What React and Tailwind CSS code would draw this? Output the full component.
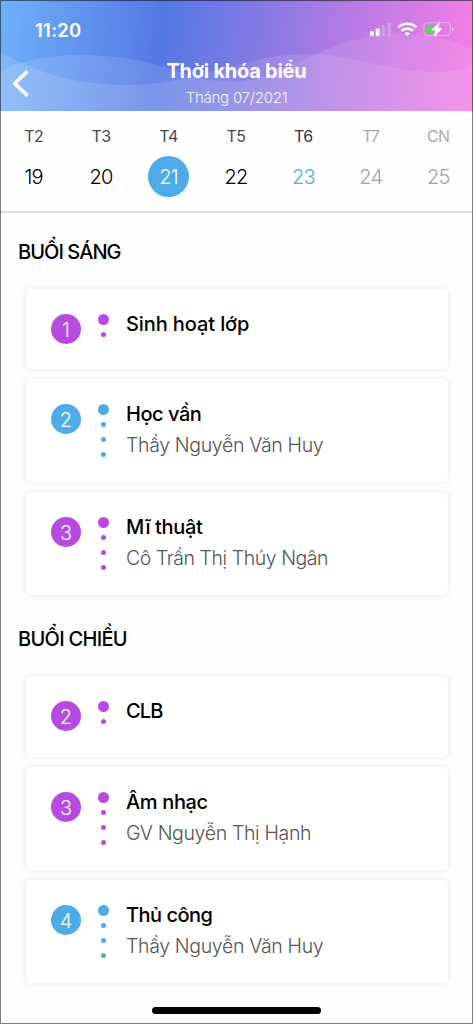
const days = [
  { name: "T2", date: "19", head: "text-[#4a4a4a]", num: "text-black" },
  { name: "T3", date: "20", head: "text-[#4a4a4a]", num: "text-black" },
  { name: "T4", date: "21", head: "text-[#4a4a4a]", num: "text-white bg-[#4dabea]" },
  { name: "T5", date: "22", head: "text-[#4a4a4a]", num: "text-black" },
  { name: "T6", date: "23", head: "text-[#333333]", num: "text-[#4dabea]" },
  { name: "T7", date: "24", head: "text-[#aaaaaa]", num: "text-[#a3a3a3]" },
  { name: "CN", date: "25", head: "text-[#aaaaaa]", num: "text-[#a3a3a3]" },
];

const morning = [
  { no: 1, title: "Sinh hoạt lớp", tracking: "tracking-[-0.1px]", color: "bg-[#b74ae1]", height: "h-[80px]" },
  { no: 2, title: "Học vần", tracking: "tracking-[-0.45px]", teacher: "Thầy Nguyễn Văn Huy", sub: "tracking-[-0.35px]", color: "bg-[#4dabea]", height: "h-[103px]" },
  { no: 3, title: "Mĩ thuật", tracking: "tracking-[-0.35px]", teacher: "Cô Trần Thị Thúy Ngân", sub: "tracking-[-0.45px]", color: "bg-[#b74ae1]", height: "h-[103px]" },
];

const afternoon = [
  { no: 2, title: "CLB", tracking: "tracking-[-0.9px]", color: "bg-[#b74ae1]", height: "h-[81px]" },
  { no: 3, title: "Âm nhạc", tracking: "tracking-[-0.35px]", teacher: "GV Nguyễn Thị Hạnh", sub: "tracking-[-0.35px]", color: "bg-[#b74ae1]", height: "h-[103px]" },
  { no: 4, title: "Thủ công", tracking: "tracking-[-0.5px]", teacher: "Thầy Nguyễn Văn Huy", sub: "tracking-[-0.35px]", color: "bg-[#4dabea]", height: "h-[103px]" },
];

function Waves() {
  return (
    <svg className="absolute inset-0 h-full w-full" viewBox="0 0 473 111" preserveAspectRatio="none">
      <defs>
        <linearGradient id="wave" x1="0" x2="473" y1="0" y2="0" gradientUnits="userSpaceOnUse">
          <stop offset="0" stopColor="#fff" stopOpacity="0.13" />
          <stop offset="1" stopColor="#fff" stopOpacity="0.09" />
        </linearGradient>
      </defs>
      <path fill="url(#wave)" d="M0 52C32 70 72 85 125 85C175 85 203 73 233 66C258 59 282 54 312 54C350 54 385 72 438 72C452 72 463 69 473 66V111H0Z" />
      <path fill="url(#wave)" d="M0 72C24 59 50 55 80 55C113 55 143 60 167 68C190 76 210 82 233 82C285 82 325 34 400 34C430 34 455 41 473 50V111H0Z" />
    </svg>
  );
}

function StatusIcons() {
  return (
    <svg className="mt-[21px] h-[18px] w-[86px]" viewBox="0 0 86 18" fill="none">
      <g fill="#fff">
        <rect x="0.8" y="10" width="4" height="5" rx="1" />
        <rect x="6.6" y="7.4" width="4" height="7.6" rx="1" />
        <rect x="12.4" y="4.6" width="4" height="10.4" rx="1" fillOpacity="0.22" />
        <rect x="18.2" y="2" width="4" height="13" rx="1" fillOpacity="0.22" />
      </g>
      <g stroke="#fff" strokeWidth="2.7">
        <path d="M29.3 6.4C34.4 1.5 42.2 1.5 47.3 6.4" />
        <path d="M32.6 9.8C35.8 6.8 40.8 6.8 44 9.8" />
      </g>
      <path d="M35.5 12.2C37.1 10.8 39.5 10.8 41.1 12.2L38.3 15.1Z" fill="#fff" />
      <rect x="54.9" y="1.8" width="26.4" height="12.8" rx="3.6" stroke="#fff" strokeOpacity="0.35" strokeWidth="1.1" />
      <path d="M83 6V10.5C84.2 10 84.8 9.2 84.8 8.2C84.8 7.3 84.2 6.5 83 6Z" fill="#fff" fillOpacity="0.45" />
      <path d="M58.3 4H68.6L63 9.2H66.4L64.8 13H58.3C57.2 13 56.7 12.4 56.7 11.5V5.5C56.7 4.6 57.2 4 58.3 4Z" fill="#64cf69" />
      <path d="M70.5 1.8L62.6 9H66.8L65.2 15.2L73 7.6H68.8Z" fill="#fff" stroke="#fff" strokeWidth="0.7" strokeLinejoin="round" />
    </svg>
  );
}

function Header() {
  return (
    <header className="relative h-[111px] shrink-0 bg-[linear-gradient(97deg,#70b0fa_0%,#5379e4_34%,#7a79e4_50%,#b57ae3_72%,#f67ee6_100%)] text-white">
      <Waves />
      <div className="relative flex h-[56px] justify-between pr-[18px] pl-[35px]">
        <div className="mt-[19px] text-[18.5px] leading-[22px] font-semibold tracking-[0.25px]">11:20</div>
        <StatusIcons />
      </div>
      <div className="relative grid grid-cols-[40px_1fr_40px]">
        <svg className="mt-[13px] ml-3 h-[29px] w-[18px]" viewBox="0 0 18 29" fill="none">
          <path d="M14.4 3.2L2.8 14.5L14.4 25.8" stroke="#fff" strokeWidth="3.6" strokeLinecap="round" strokeLinejoin="round" />
        </svg>
        <div className="flex flex-col items-center">
          <h1 className="mt-[1px] text-[20px] leading-[28px] font-bold tracking-[-0.25px] whitespace-nowrap">Thời khóa biểu</h1>
          <p className="text-[15px] leading-[25px] font-light tracking-[-0.25px] text-white/90">Tháng 07/2021</p>
        </div>
      </div>
    </header>
  );
}

function Calendar() {
  return (
    <div className="grid h-[102px] shrink-0 grid-cols-7 border-b-2 border-[#dedede] pr-px">
      {days.map((d) => (
        <div key={d.name} className="flex flex-col items-center">
          <div className={"mt-[14px] text-[16px] leading-[22px] tracking-[-0.5px] " + d.head}>{d.name}</div>
          <div className={"mt-[9px] flex size-[41px] items-center justify-center rounded-full text-[20px] font-[350] tracking-[-0.7px] " + d.num}>{d.date}</div>
        </div>
      ))}
    </div>
  );
}

function Lesson({ item }) {
  return (
    <article className={"flex rounded-[5px] bg-white pl-[25px] shadow-[0_0_7px_rgba(0,0,0,0.1)] " + item.height}>
      <div className={"mt-[25px] flex size-[30px] shrink-0 items-center justify-center rounded-full pt-[2px] text-[20px] font-light text-white " + item.color}>
        {item.no}
      </div>
      <div className="mt-[25px] ml-[17px] flex w-[11px] shrink-0 flex-col items-center">
        <span className={"size-[10.5px] rounded-full " + item.color} />
        {(item.teacher ? [1, 2, 3] : [1]).map((n) => (
          <span key={n} className={"size-[5.2px] rounded-full " + (n === 1 ? "mt-[7.3px] " : "mt-[10px] ") + item.color} />
        ))}
      </div>
      <div className="mt-[20px] ml-[17px] flex flex-col">
        <h3 className={"text-[20px] leading-[31px] font-medium text-black " + item.tracking}>{item.title}</h3>
        {item.teacher && (
          <p className={"text-[19.5px] leading-[31px] font-[330] whitespace-nowrap text-[#555555] " + item.sub}>{item.teacher}</p>
        )}
      </div>
    </article>
  );
}

export default function App() {
  return (
    <div className="relative flex h-[1024px] w-[473px] flex-col overflow-hidden bg-[#fefefe] font-['Inter','Roboto',sans-serif]">
      <Header />
      <Calendar />
      <main className="flex flex-col">
        <h2 className="mt-[24px] ml-[18px] text-[20px] leading-[30px] font-medium tracking-[-0.95px] text-black">BUỔI SÁNG</h2>
        <section className="mt-[22px] mr-[25px] ml-[26px] flex flex-col gap-[10px]">
          {morning.map((m) => <Lesson key={m.no} item={m} />)}
        </section>
        <h2 className="mt-[29px] ml-[18px] text-[20px] leading-[30px] font-medium tracking-[-0.7px] text-black">BUỔI CHIỀU</h2>
        <section className="mt-[22px] mr-[25px] ml-[26px] flex flex-col gap-[10px]">
          {afternoon.map((m) => <Lesson key={m.no} item={m} />)}
        </section>
      </main>
      <div className="mt-[24px] ml-[152px] h-[7px] w-[169px] shrink-0 rounded-full bg-black" />
      <div className="pointer-events-none absolute inset-0 border border-black/50" />
    </div>
  );
}
